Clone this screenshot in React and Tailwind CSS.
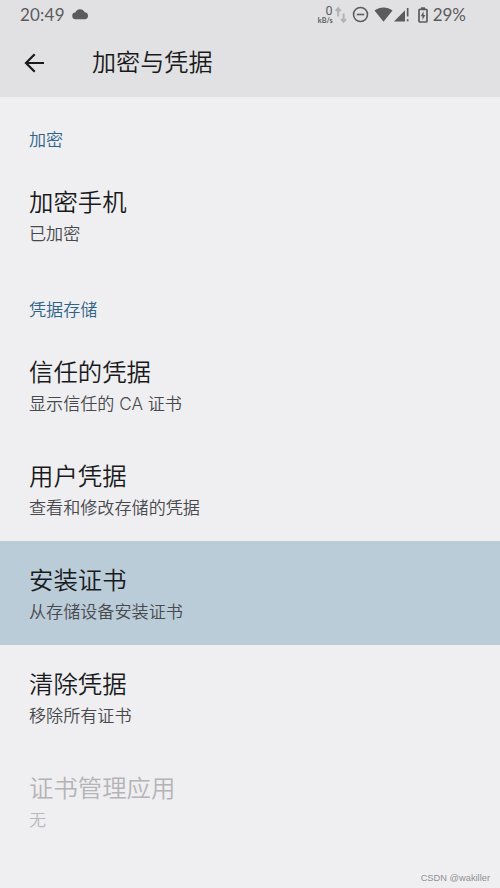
const sections = [
  {
    label: "加密",
    items: [{ title: "加密手机", summary: "已加密" }],
  },
  {
    label: "凭据存储",
    items: [
      { title: "信任的凭据", summary: "显示信任的 CA 证书" },
      { title: "用户凭据", summary: "查看和修改存储的凭据" },
      { title: "安装证书", summary: "从存储设备安装证书", active: true },
      { title: "清除凭据", summary: "移除所有证书" },
      { title: "证书管理应用", summary: "无", disabled: true },
    ],
  },
];

function StatusBar() {
  return (
    <div className="flex h-[29px] items-center pl-[20px] pr-[34px] font-['Lato','Noto_Sans_CJK_SC',sans-serif] font-normal text-[#5b5b5e]">
      <span className="w-[46px] whitespace-nowrap text-[17px] leading-5 tracking-[0.2px]">20:49</span>
      <svg className="ml-[6px] -mt-px" width="17" height="12" viewBox="0 0 17 12" fill="currentColor">
        <path d="M3.8 11.2a3.3 3.3 0 0 1-.5-6.6A5 5 0 0 1 12.6 4.3a3.5 3.5 0 0 1 .7 6.9z" />
      </svg>
      <div className="ml-auto flex items-center">
        <div className="flex w-4 flex-col items-end">
          <span className="text-[12.5px] leading-[11px] font-['Roboto',sans-serif]">0</span>
          <span className="mt-[1px] text-[7.2px] leading-[7px] font-bold">kB/s</span>
        </div>
        <svg className="ml-[2px]" width="12" height="18" viewBox="0 0 12 18" fill="none" stroke="#b3b3b6" strokeWidth="2">
          <path d="M3.2 10.5V2.5M.8 5l2.4-2.7L5.6 5M8.6 7.5v8M6.2 13l2.4 2.7L11 13" />
        </svg>
        <svg className="ml-[5px]" width="17" height="17" viewBox="0 0 17 17" fill="none" stroke="currentColor" strokeWidth="1.6">
          <circle cx="8.5" cy="8.5" r="7" />
          <path d="M4.8 8.5h7.4" />
        </svg>
        <svg className="ml-[5px]" width="19" height="15" viewBox="0 0 19 15" fill="currentColor">
          <path d="M.5 3.6C5.7-.6 13.3-.6 18.5 3.6L9.5 14.7z" />
        </svg>
        <svg className="ml-[1px]" width="16" height="15" viewBox="0 0 16 15" fill="currentColor">
          <path d="M0 14.5 11 3.3v11.2zM12.8 1h1.7v8.5h-1.7zM12.8 12.3h1.7v2h-1.7z" />
        </svg>
        <svg className="ml-2" width="10" height="16" viewBox="0 0 10 16">
          <path d="M3 .3h4v2H3z" fill="currentColor" />
          <rect x="1" y="2.3" width="8" height="12.7" rx="1" fill="none" stroke="currentColor" strokeWidth="1.7" />
          <path d="M5.6 4.3 2.7 9.2h1.8v3.7l2.9-5H5.6z" fill="currentColor" />
        </svg>
        <span className="ml-[5px] text-[17px] leading-5">29%</span>
      </div>
    </div>
  );
}

function Row({ title, summary, active, disabled }) {
  return (
    <div className={`h-[104px] pt-[21px] pl-[29px] ${active ? "bg-[#bbccd9]" : ""}`}>
      <p className={`text-[24.4px] leading-9 ${disabled ? "text-[#b4b4b6]" : "text-[#191a1c]"}`}>{title}</p>
      <p className={`mt-[2px] text-[17.1px] leading-6 ${disabled ? "text-[#b9b9bb]" : "text-[#48494d]"}`}>{summary}</p>
    </div>
  );
}

export default function App() {
  return (
    <div className="relative h-[888px] w-[500px] overflow-hidden bg-[#efeff1] font-['Inter','Noto_Sans_CJK_SC',sans-serif] font-[350]">
      <header className="h-[97px] bg-[#e1e1e3]">
        <StatusBar />
        <div className="flex h-[68px] items-center pl-6">
          <svg width="20" height="20" viewBox="0 0 20 20" fill="none" stroke="#19191b" strokeWidth="2.2">
            <path d="M20 10H2M10.7 1.3 2 10l8.7 8.7" />
          </svg>
          <h1 className="ml-12 text-[24.1px] leading-9 font-[350] text-[#19191b]">加密与凭据</h1>
        </div>
      </header>
      <main>
        {sections.map((section) => (
          <section key={section.label}>
            <h2 className="h-[66px] pt-[31px] pl-[29px] text-[17.1px] leading-6 font-[350] text-[#2f6489]">{section.label}</h2>
            {section.items.map((item) => (
              <Row key={item.title} {...item} />
            ))}
          </section>
        ))}
      </main>
      <span className="absolute right-[10px] bottom-[3px] font-['Liberation_Sans',sans-serif] text-[9.3px] leading-[14px] text-[#8f8f91]">
        CSDN @wakiller
      </span>
    </div>
  );
}
